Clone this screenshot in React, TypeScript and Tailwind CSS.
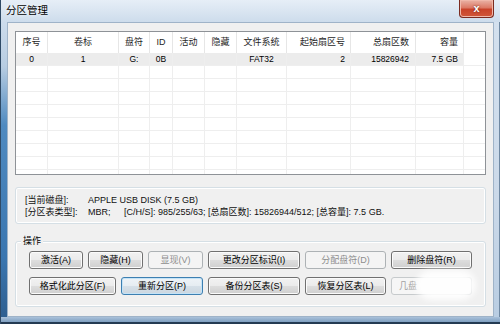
import React from 'react';

const FONT = '[font-family:"Liberation_Sans","Noto_Sans_CJK_SC",sans-serif]';

type Col = { title: string; width: string; align: string; value: string };

const columns: Col[] = [
  { title: '序号', width: 'w-[32px]', align: 'justify-center', value: '0' },
  { title: '卷标', width: 'w-[71px]', align: 'justify-center', value: '1' },
  { title: '盘符', width: 'w-[31px]', align: 'justify-center', value: 'G:' },
  { title: 'ID', width: 'w-[23px]', align: 'justify-center', value: '0B' },
  { title: '活动', width: 'w-[32px]', align: 'justify-center', value: '' },
  { title: '隐藏', width: 'w-[32px]', align: 'justify-center', value: '' },
  { title: '文件系统', width: 'w-[50px]', align: 'justify-center', value: 'FAT32' },
  { title: '起始扇区号', width: 'w-[64px]', align: 'justify-end pr-[5px]', value: '2' },
  { title: '总扇区数', width: 'w-[65px]', align: 'justify-end pr-[6px]', value: '15826942' },
  { title: '容量', width: 'w-[48px]', align: 'justify-end pr-[5px]', value: '7.5 GB' },
];

const rows = [0, 1, 2, 3, 4, 5, 6, 7, 8, 9];

type Kind = 'normal' | 'focus' | 'disabled';

const btnStyle: Record<Kind, string> = {
  normal:
    'border-[#707070] bg-[linear-gradient(180deg,#f2f2f2_0%,#ebebeb_48%,#dddddd_52%,#cfcfcf_100%)] text-black shadow-[inset_0_0_0_1px_#fbfbfb]',
  focus:
    'border-[#3c7fb1] bg-[linear-gradient(180deg,#eef3f7_0%,#e6edf2_48%,#d6e0e8_52%,#cbd6df_100%)] text-black shadow-[inset_0_0_0_1px_#c4e3f7]',
  disabled: 'border-[#adb2b5] bg-[#f4f4f4] text-[#8d8d8d]',
};

function Btn({ label, width, kind = 'normal' }: { label: string; width: string; kind?: Kind }) {
  return (
    <div
      className={`${width} h-[18px] shrink-0 rounded-[3px] border flex items-center justify-center text-[9px] leading-none ${btnStyle[kind]}`}
    >
      {label}
    </div>
  );
}

export default function App() {
  return (
    <div
      className={`w-[500px] h-[324px] flex flex-col overflow-hidden border-l border-[#2f4a66] bg-[#c9d9ea] ${FONT}`}
    >
      {/* Title bar */}
      <div className="h-[22px] shrink-0 flex items-start pl-[5px] bg-[linear-gradient(180deg,#e6eef7_0%,#dbe6f2_45%,#cddcec_100%)]">
        <span className="mt-[5px] text-[10.5px] leading-none text-black [text-shadow:0_0_4px_#ffffff]">分区管理</span>
        <div className="ml-auto mr-[6px] w-[35px] h-[18px] rounded-b-[4px] border border-t-0 border-[#7b2b20] bg-[linear-gradient(180deg,#eab3a6_0%,#dc7a66_45%,#c9432a_55%,#d0573a_100%)] flex items-center justify-center shadow-[inset_0_0_0_1px_#f0b8aa]">
          <span className="text-white text-[11px] font-bold leading-none -mt-[1px] [text-shadow:0_0_2px_#5a1a10]">x</span>
        </div>
      </div>

      <div className="flex-1 flex">
        {/* Left frame */}
        <div className="w-[6px] shrink-0 bg-[linear-gradient(180deg,#cddcec_0%,#b8cde2_15%,#4f8ac0_35%,#3a76b0_80%,#2f5f90_100%)]" />

        {/* Client area */}
        <div className="flex-1 border border-[#9fb3c8] bg-[#f0f0f0] px-[7px] pt-[8px] flex flex-col">
          {/* List view */}
          <div className="h-[144px] shrink-0 border border-[#8e9297] bg-white overflow-hidden flex flex-col">
            <div className="h-[21px] shrink-0 flex">
              {columns.map((c) => (
                <div
                  key={c.title}
                  className={`${c.width} shrink-0 flex items-center ${c.align} border-r border-[#e6e6e6] text-[9px] text-[#1e1e1e]`}
                >
                  {c.title}
                </div>
              ))}
              <div className="flex-1" />
            </div>
            {rows.map((r) => (
              <div key={r} className="h-[13px] shrink-0 flex border-b border-[#eeeeee]">
                {columns.map((c) => (
                  <div
                    key={c.title}
                    className={`${c.width} shrink-0 flex items-center ${c.align} border-r border-[#eeeeee] text-[8.5px] leading-none ${
                      r === 0 ? 'bg-[#ececec]' : ''
                    }`}
                  >
                    {r === 0 ? c.value : ''}
                  </div>
                ))}
                <div className="flex-1" />
              </div>
            ))}
          </div>

          {/* Disk info */}
          <div className="mt-[12px] h-[37px] shrink-0 rounded-[3px] border border-[#d5dfe5] shadow-[inset_0_0_0_1px_#ffffff] pl-[9px] pt-[6px] text-[9px] leading-[12px] text-[#111]">
            <div className="flex">
              <span className="w-[63px] shrink-0">[当前磁盘]:</span>
              <span>APPLE USB DISK (7.5 GB)</span>
            </div>
            <div className="flex whitespace-pre">
              <span className="w-[63px] shrink-0">[分区表类型]:</span>
              <span className="w-[36px] shrink-0">MBR;</span>
              <span>[C/H/S]: 985/255/63; [总扇区数]: 15826944/512; [总容量]: 7.5 GB.</span>
            </div>
          </div>

          {/* Operations */}
          <div className="relative mt-[17px] h-[66px] shrink-0 rounded-[3px] border border-[#d5dfe5] shadow-[inset_0_0_0_1px_#ffffff] pl-[13px] pt-[9px] flex flex-col gap-[8px]">
            <span className="absolute left-[5px] -top-[6px] px-[2px] bg-[#f0f0f0] text-[9px] leading-[11px]">操作</span>
            <div className="flex gap-[5px]">
              <Btn label="激活(A)" width="w-[54px]" />
              <Btn label="隐藏(H)" width="w-[55px]" />
              <Btn label="显现(V)" width="w-[55px]" kind="disabled" />
              <Btn label="更改分区标识(I)" width="w-[92px]" />
              <Btn label="分配盘符(D)" width="w-[81px]" kind="disabled" />
              <Btn label="删除盘符(R)" width="w-[81px]" />
            </div>
            <div className="flex gap-[5px]">
              <Btn label="格式化此分区(F)" width="w-[87px]" />
              <Btn label="重新分区(P)" width="w-[82px]" kind="focus" />
              <Btn label="备份分区表(S)" width="w-[92px]" />
              <Btn label="恢复分区表(L)" width="w-[81px]" />
              <div className="relative w-[81px] h-[18px] shrink-0 rounded-[3px] border border-[#c6cacc] bg-[#f6f6f6] flex items-center pl-[7px] text-[9px] leading-none text-[#a0a0a0]">
                几盘
                <div className="absolute left-[24px] -top-[8px] w-[60px] h-[30px] rounded-full bg-white/90 blur-[3px]" />
              </div>
            </div>
          </div>
        </div>

        {/* Right frame */}
        <div className="w-[6px] shrink-0 border-r border-[#6f88a2] bg-[linear-gradient(180deg,#d3e0ee_0%,#cbd9e9_60%,#b9cde2_100%)]" />
      </div>

      {/* Bottom frame */}
      <div className="h-[7px] shrink-0 border-b-2 border-[#243a52] bg-[linear-gradient(180deg,#a9c1da_0%,#7f9fc0_100%)]" />
    </div>
  );
}
